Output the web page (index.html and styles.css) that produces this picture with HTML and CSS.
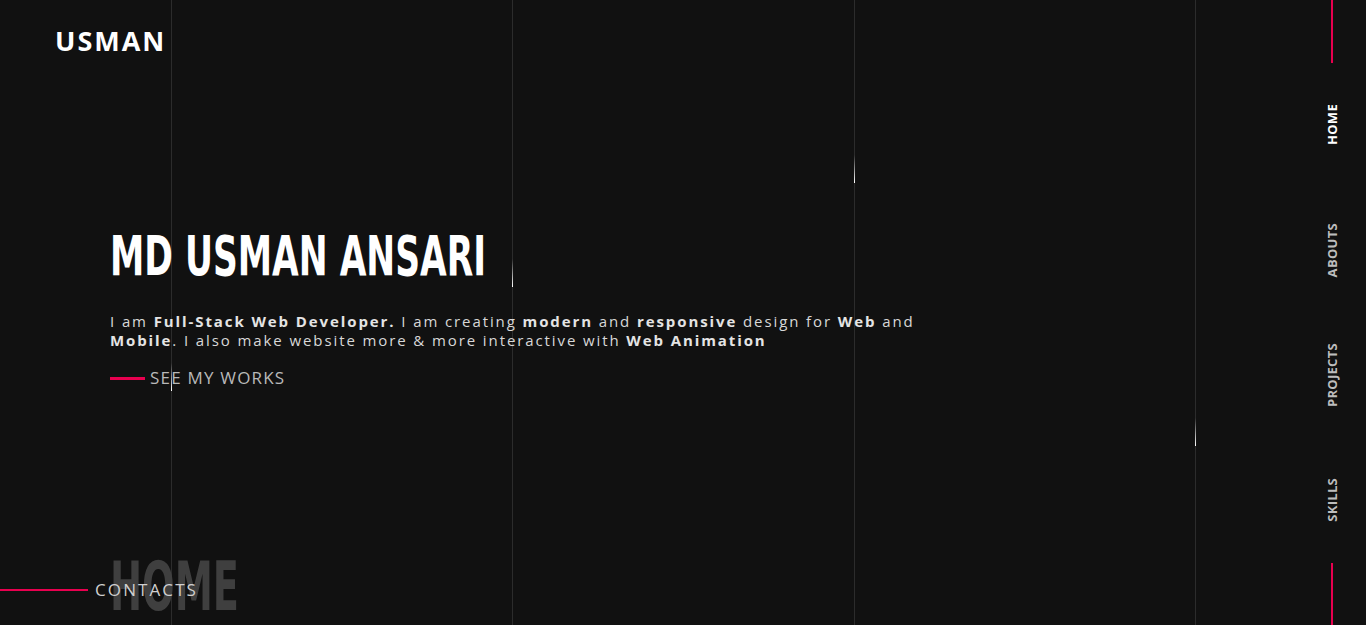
FILE: index.html
```html
<!DOCTYPE html>
<html lang="en">
<head>
<meta charset="utf-8">
<title>Usman</title>
<link rel="stylesheet" href="styles.css">
</head>
<body>
<div class="page">
  <div class="grid-lines">
    <div class="col"><span class="glint g1"></span></div>
    <div class="col"><span class="glint g2"></span></div>
    <div class="col"><span class="glint g3"></span></div>
    <div class="col"><span class="glint g4"></span></div>
  </div>

  <main class="main">
    <header class="header">
      <a class="logo" href="#">USMAN</a>
    </header>

    <section class="hero">
      <h1 class="title">MD USMAN ANSARI</h1>
      <p class="intro">I am <b>Full-Stack Web Developer.</b> I am creating <b>modern</b> and <b>responsive</b> design for <b>Web</b> and <b>Mobile</b>. I also make website more &amp; more interactive with <b>Web Animation</b></p>
      <a class="works" href="#"><span class="works-line"></span>SEE MY WORKS</a>
    </section>

    <footer class="footer">
      <span class="section-name">HOME</span>
      <a class="contacts" href="#"><span class="contacts-line"></span>CONTACTS</a>
    </footer>
  </main>

  <nav class="side-nav">
    <span class="nav-line"></span>
    <a class="nav-item active" href="#"><span>HOME</span></a>
    <a class="nav-item" href="#"><span>ABOUTS</span></a>
    <a class="nav-item" href="#"><span>PROJECTS</span></a>
    <a class="nav-item" href="#"><span>SKILLS</span></a>
    <span class="nav-line"></span>
  </nav>
</div>
</body>
</html>
```

FILE: styles.css
```css
* { box-sizing: border-box; }

html, body {
  margin: 0;
  padding: 0;
  background: #111111;
  height: 625px;
  overflow: hidden;
}

body {
  font-family: "Open Sans", "DejaVu Sans", sans-serif;
  color: #dcdcdc;
}

a { text-decoration: none; color: inherit; }

.page {
  position: relative;
  display: flex;
  height: 625px;
}

/* background vertical lines */
.grid-lines {
  position: absolute;
  inset: 0;
  display: grid;
  grid-template-columns: repeat(4, 1fr);
  pointer-events: none;
  z-index: 0;
}
.col {
  position: relative;
}
.col::before {
  content: "";
  position: absolute;
  top: 0;
  bottom: 0;
  left: 50%;
  width: 1px;
  background: #2c2c2c;
}
.glint {
  position: absolute;
  left: 50%;
  width: 1px;
  height: 28px;
  background: linear-gradient(to bottom, rgba(255,255,255,0), #ffffff);
}
.g1 { top: 363px; }
.g2 { top: 259px; }
.g3 { top: 155px; }
.g4 { top: 418px; }

.main {
  position: relative;
  z-index: 1;
  flex: 1;
  display: flex;
  flex-direction: column;
}

.header {
  padding: 24px 0 0 55px;
}
.logo {
  font-family: "Open Sans", sans-serif;
  font-weight: 700;
  font-size: 27px;
  line-height: 34px;
  letter-spacing: 2px;
  color: #ffffff;
}

.hero {
  padding: 0 0 0 110px;
  margin-top: 168px;
}
.title {
  display: inline-block;
  margin: 0;
  font-family: "DejaVu Sans", sans-serif;
  font-weight: 700;
  font-size: 55px;
  line-height: 60px;
  letter-spacing: 0;
  color: #ffffff;
  transform: scaleX(0.627);
  transform-origin: left center;
  white-space: nowrap;
}
.intro {
  margin: 26px 0 0;
  max-width: 830px;
  font-size: 15px;
  line-height: 19px;
  letter-spacing: 1.9px;
  color: #d8d8d8;
}
.intro b { font-weight: 700; color: #e4e4e4; }

.works {
  display: flex;
  align-items: center;
  gap: 5px;
  margin-top: 18px;
  font-size: 17px;
  line-height: 20px;
  color: #b9b9b9;
  letter-spacing: 1.2px;
}
.works-line {
  width: 35px;
  height: 3px;
  background: #e8004f;
}

.footer {
  position: relative;
  margin-top: auto;
  height: 70px;
}
.section-name {
  position: absolute;
  left: 110px;
  top: -1px;
  font-family: "DejaVu Sans", sans-serif;
  font-weight: 700;
  font-size: 67px;
  line-height: 67px;
  color: #3f3f3f;
  transform: scaleX(0.572);
  transform-origin: left center;
}
.contacts {
  position: relative;
  display: flex;
  align-items: center;
  gap: 7px;
  margin-top: 23px;
  font-size: 17px;
  line-height: 24px;
  letter-spacing: 2.1px;
  color: #cfcfcf;
}
.contacts-line {
  width: 88px;
  height: 2px;
  background: #e8004f;
}

.side-nav {
  position: relative;
  z-index: 1;
  width: 68px;
  display: flex;
  flex-direction: column;
  align-items: center;
}
.nav-line {
  display: block;
  width: 2px;
  height: 62.5px;
  background: #e8004f;
}
.nav-item {
  flex: 1;
  display: flex;
  align-items: center;
  justify-content: center;
}
.nav-item span {
  writing-mode: vertical-rl;
  transform: rotate(180deg);
  font-weight: 700;
  font-size: 13px;
  letter-spacing: 0.3px;
  color: #bdbdbd;
}
.nav-item.active span { color: #ffffff; }
```
